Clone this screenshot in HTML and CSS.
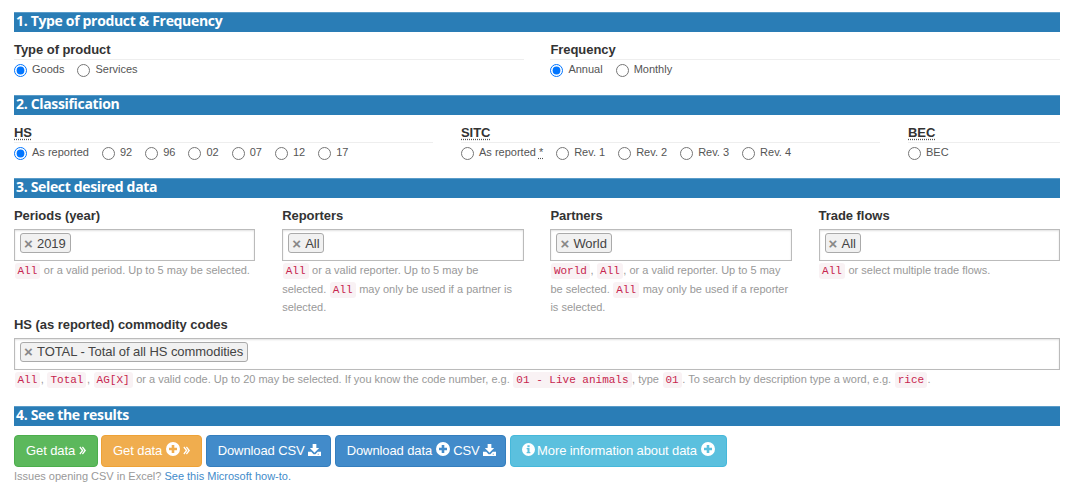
FILE: index.html
```html
<!DOCTYPE html>
<html lang="en">
<head>
<meta charset="utf-8">
<title>Trade data query</title>
<link rel="stylesheet" href="styles.css">
</head>
<body>
<svg class="defs" width="0" height="0" aria-hidden="true">
  <symbol id="plus" viewBox="0 0 14 14"><path fill-rule="evenodd" d="M7 0a7 7 0 1 1 0 14A7 7 0 0 1 7 0zM5.700 3v2.700H3v2.600h2.700V11h2.600V8.300H11V5.700H8.300V3z"/></symbol>
  <symbol id="info" viewBox="0 0 14 14"><path fill-rule="evenodd" d="M7 0a7 7 0 1 1 0 14A7 7 0 0 1 7 0zM5.800 2.500v2h2.400v-2zM5 5.500v1.300h.9v3H5V11h4V9.800h-.9V5.500z"/></symbol>
  <symbol id="save" viewBox="0 0 14 14"><path d="M5 1h4v4.500h3L7 10.500 2 5.500h3zM0 9.500h3.500L6 12h2l2.500-2.500H14V14H0zm10.500 2.200v1h1v-1z"/></symbol>
  <symbol id="dbl" viewBox="0 0 9 10"><path d="M.5 1.200 1.700 0l4 5-4 5-1.200-1.200L3.500 5zm3.300 0L5 0l4 5-4 5-1.200-1.200L6.800 5z"/></symbol>
</svg>

<section class="section">
  <h2 class="bar">1. Type of product &amp; Frequency</h2>
  <div class="grid two">
    <div class="group">
      <h3 class="group-title">Type of product</h3>
      <div class="radios">
        <label class="radio"><input type="radio" name="type" checked>Goods</label>
        <label class="radio"><input type="radio" name="type">Services</label>
      </div>
    </div>
    <div class="group">
      <h3 class="group-title">Frequency</h3>
      <div class="radios">
        <label class="radio"><input type="radio" name="freq" checked>Annual</label>
        <label class="radio"><input type="radio" name="freq">Monthly</label>
      </div>
    </div>
  </div>
</section>

<section class="section">
  <h2 class="bar">2. Classification</h2>
  <div class="grid three">
    <div class="group">
      <h3 class="group-title"><abbr class="abbr">HS</abbr></h3>
      <div class="radios">
        <label class="radio"><input type="radio" name="cl" checked>As reported</label>
        <label class="radio"><input type="radio" name="cl">92</label>
        <label class="radio"><input type="radio" name="cl">96</label>
        <label class="radio"><input type="radio" name="cl">02</label>
        <label class="radio"><input type="radio" name="cl">07</label>
        <label class="radio"><input type="radio" name="cl">12</label>
        <label class="radio"><input type="radio" name="cl">17</label>
      </div>
    </div>
    <div class="group">
      <h3 class="group-title"><abbr class="abbr">SITC</abbr></h3>
      <div class="radios">
        <label class="radio"><input type="radio" name="cl">As reported<abbr class="abbr star">*</abbr></label>
        <label class="radio"><input type="radio" name="cl">Rev. 1</label>
        <label class="radio"><input type="radio" name="cl">Rev. 2</label>
        <label class="radio"><input type="radio" name="cl">Rev. 3</label>
        <label class="radio"><input type="radio" name="cl">Rev. 4</label>
      </div>
    </div>
    <div class="group">
      <h3 class="group-title"><abbr class="abbr">BEC</abbr></h3>
      <div class="radios">
        <label class="radio"><input type="radio" name="cl">BEC</label>
      </div>
    </div>
  </div>
</section>

<section class="section">
  <h2 class="bar">3. Select desired data</h2>
  <div class="grid four">
    <div class="field">
      <h3 class="field-title">Periods (year)</h3>
      <div class="select"><span class="tag"><span class="x">×</span>2019</span></div>
      <p class="hint"><code>All</code> or a valid period. Up to 5 may be selected.</p>
    </div>
    <div class="field">
      <h3 class="field-title">Reporters</h3>
      <div class="select"><span class="tag"><span class="x">×</span>All</span></div>
      <p class="hint"><code>All</code> or a valid reporter. Up to 5 may be selected. <code>All</code> may only be used if a partner is selected.</p>
    </div>
    <div class="field">
      <h3 class="field-title">Partners</h3>
      <div class="select"><span class="tag"><span class="x">×</span>World</span></div>
      <p class="hint"><code>World</code>, <code>All</code>, or a valid reporter. Up to 5 may be selected. <code>All</code> may only be used if a reporter is selected.</p>
    </div>
    <div class="field">
      <h3 class="field-title">Trade flows</h3>
      <div class="select"><span class="tag"><span class="x">×</span>All</span></div>
      <p class="hint"><code>All</code> or select multiple trade flows.</p>
    </div>
  </div>
  <div class="field wide">
    <h3 class="field-title">HS (as reported) commodity codes</h3>
    <div class="select"><span class="tag"><span class="x">×</span>TOTAL - Total of all HS commodities</span></div>
    <p class="hint"><code>All</code>, <code>Total</code>, <code>AG[X]</code> or a valid code. Up to 20 may be selected. If you know the code number, e.g. <code>01 - Live animals</code>, type <code>01</code>. To search by description type a word, e.g. <code>rice</code>.</p>
  </div>
</section>

<section class="section">
  <h2 class="bar">4. See the results</h2>
  <div class="buttons">
    <button class="btn green" type="button">Get data <svg class="dbl"><use href="#dbl"/></svg></button>
    <button class="btn orange" type="button">Get data <svg class="ico"><use href="#plus"/></svg> <svg class="dbl"><use href="#dbl"/></svg></button>
    <button class="btn blue" type="button">Download CSV <svg class="ico save"><use href="#save"/></svg></button>
    <button class="btn blue" type="button">Download data <svg class="ico"><use href="#plus"/></svg> CSV <svg class="ico save"><use href="#save"/></svg></button>
    <button class="btn cyan" type="button"><svg class="ico info"><use href="#info"/></svg> More information about data <svg class="ico"><use href="#plus"/></svg></button>
  </div>
  <p class="note">Issues opening CSV in Excel? <a class="link" href="#">See this Microsoft how-to.</a></p>
</section>
</body>
</html>
```

FILE: styles.css
```css
* { box-sizing: border-box; }
html, body { margin: 0; background: #fff; }
body {
  padding: 12px 20px 0 14px;
  font-family: "Liberation Sans", Arial, sans-serif;
  font-size: 11px;
  color: #333;
  height: 495px;
  overflow: hidden;
}
.defs { position: absolute; }
.section { margin: 0; }
.bar {
  margin: 0;
  height: 20px;
  padding-left: 2px;
  background: #2a7db6;
  border-top: 1px solid #5a9cc9;
  color: #fff;
  font: 700 14px/16px "Open Sans", sans-serif;
  letter-spacing: -.33px;
}
.grid { display: grid; }
.two { grid-template-columns: 1fr 1fr; column-gap: 26.800px; height: 63px; }
.three { grid-template-columns: 419fr 419fr 152fr; column-gap: 28px; height: 63px; }
.four { grid-template-columns: repeat(4, 1fr); column-gap: 26.800px; }
.group-title {
  margin: 10px 0 0;
  height: 18px;
  font-size: 13px;
  line-height: 16px;
  font-weight: 700;
  letter-spacing: -.05px;
  color: #333;
  border-bottom: 1px solid #eee;
}
.abbr {
  text-decoration: underline dotted #555;
  text-underline-offset: 2px;
}
.star { margin-left: 3px; }
.radios { display: flex; align-items: center; margin-top: 2px; color: #555; line-height: 15px; }
.radio { display: flex; align-items: center; margin-right: 13px; }
.radio input { margin: 1px 5px 0 0; width: 13px; height: 13px; }
.field-title {
  margin: 10px 0 5px;
  font-size: 13px;
  line-height: 16px;
  font-weight: 700;
  letter-spacing: -.05px;
  color: #333;
}
.select {
  height: 32px;
  padding: 3px 5px;
  border: 1px solid #bbb;
  box-shadow: inset 0 1px 2px rgba(0,0,0,.12);
  display: flex;
  align-items: flex-start;
}
.tag {
  display: inline-flex;
  align-items: center;
  height: 20px;
  padding: 0 4px 0 3px;
  font-size: 13px;
  letter-spacing: -.06px;
  color: #444;
  background: #f1f1f1;
  border: 1px solid #aaa;
  border-radius: 3px;
}
.x { color: #888; font-weight: 700; font-size: 15px; width: 13px; }
.hint {
  margin: 0;
  font-size: 11px;
  line-height: 18.500px;
  color: #999;
}
code {
  font-family: "Liberation Mono", monospace;
  font-size: 11px;
  line-height: 1;
  margin: 0 .5px;
  padding: 2px 3px;
  color: #c7254e;
  background: #f9f2f4;
  border-radius: 3px;
}
.wide { height: 89px; }
.wide .field-title { margin: 0 0 5px; }
.buttons { display: flex; gap: 3.500px; margin-top: 9px; }
.btn {
  height: 32px;
  padding: 0 11px;
  font: 400 13px/20px "Liberation Sans", Arial, sans-serif;
  letter-spacing: -.1px;
  color: #fff;
  border: 1px solid transparent;
  border-radius: 4px;
  white-space: pre;
}
.green { background: #5cb85c; border-color: #4cae4c; }
.orange { background: #f0ad4e; border-color: #eea236; }
.blue { background: #428bca; border-color: #357ebd; }
.cyan { background: #5bc0de; border-color: #46b8da; }
.ico { width: 14px; height: 14px; fill: #fff; vertical-align: -1px; }
.save { width: 13px; height: 13px; margin-right: -2px; }
.info { width: 13px; height: 13px; margin-right: -1px; }
.dbl { width: 7px; height: 9px; fill: #fff; vertical-align: 0; }
.note { margin: 0; font-size: 11px; line-height: 18px; color: #999; }
.link { color: #428bca; text-decoration: none; }
```
